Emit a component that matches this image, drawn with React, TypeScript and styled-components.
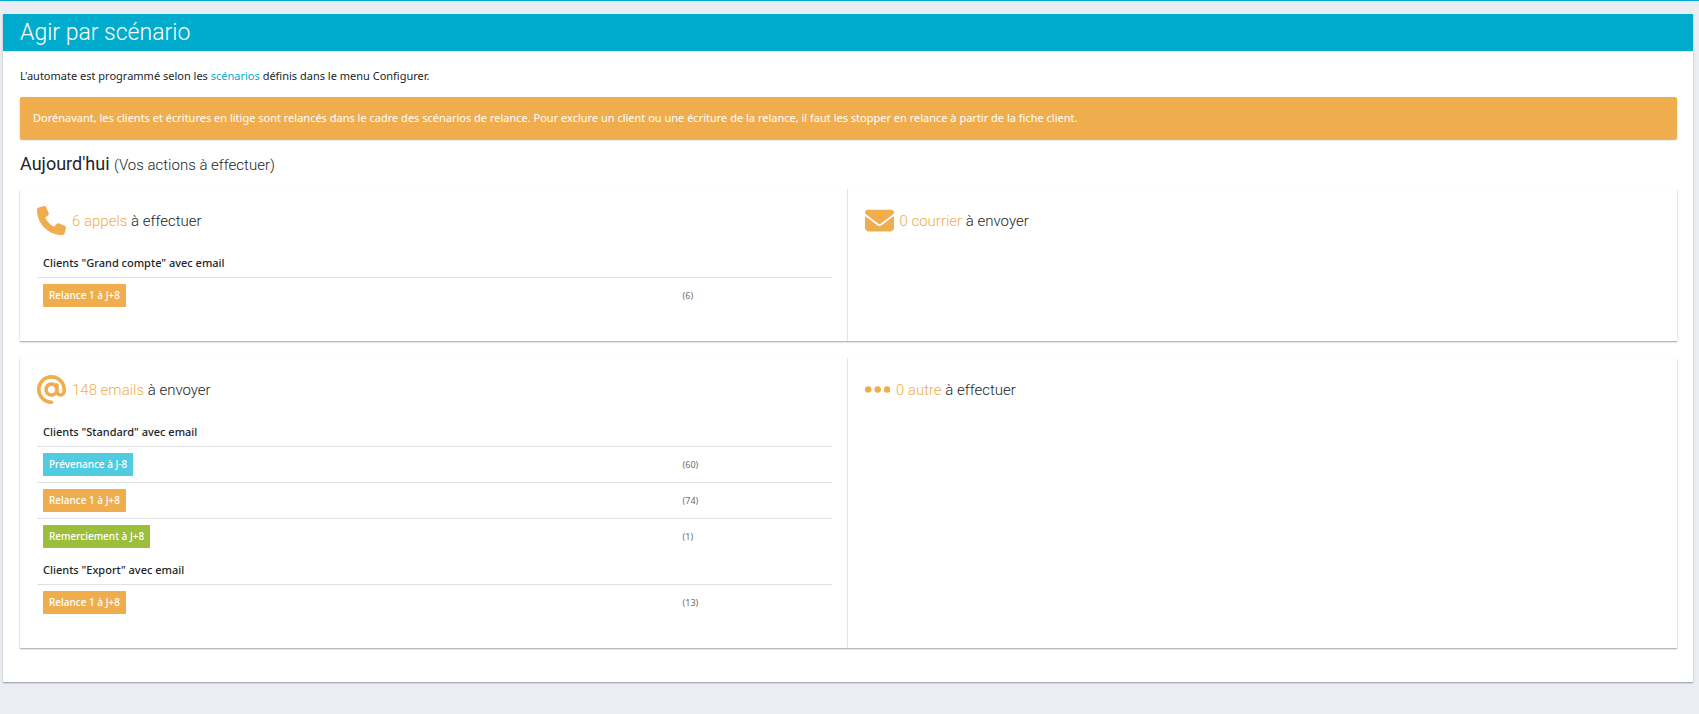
import React from "react";
import styled, { createGlobalStyle } from "styled-components";
import { FaAt, FaEnvelope, FaPhone } from "react-icons/fa6";

const GlobalStyle = createGlobalStyle`
  *, *::before, *::after { box-sizing: border-box; }
  body {
    margin: 0;
    background: #eaeef3;
    color: #212529;
    font-family: "Segoe UI", "Noto Sans", "Open Sans", sans-serif;
    font-size: 11px;
    line-height: 18px;
  }
`;

const ORANGE = "#f0ad4e";
const CYAN = "#00accd";

const Page = styled.main`
  border-top: 1px solid ${CYAN};
  padding: 13px 6px 32px 3px;
`;

const shadow = "0 1px 2px rgba(0, 0, 0, 0.2), 0 1px 1px rgba(0, 0, 0, 0.16)";

const Panel = styled.section`
  background: #fff;
  box-shadow: ${shadow};
`;

const PanelHeader = styled.header`
  display: flex;
  align-items: center;
  height: 37px;
  padding: 0 17px;
  background: ${CYAN};
`;

const PanelTitle = styled.h1`
  margin: 0;
  color: #fff;
  font: 300 23px/35px Roboto, sans-serif;
`;

const PanelBody = styled.div`
  padding: 16px 16px 34px 17px;
`;

const Intro = styled.p`
  margin: 0 0 12px;
`;

const TextLink = styled.a`
  color: ${CYAN};
  text-decoration: none;
`;

const Alert = styled.div`
  padding: 12px 13px;
  border-radius: 2px;
  background: ${ORANGE};
  box-shadow: ${shadow};
  color: #fff;
`;

const SectionTitle = styled.h2`
  margin: 13px 0 13px;
  font: 400 18px/24px Roboto, sans-serif;

  small {
    font-size: 15px;
    font-weight: 300;
    line-height: 1;
  }
`;

const Board = styled.div`
  display: flex;
  flex-direction: column;
  gap: 17px;
`;

const Card = styled.div`
  display: grid;
  grid-template-columns: calc(50% - 2px) 1fr;
  background: #fff;
  box-shadow: ${shadow};
`;

const Column = styled.section`
  padding: 16px 15px 28px 17px;

  & + & {
    border-left: 1px solid #e3e5e7;
  }
`;

const ColumnTitle = styled.h3`
  display: flex;
  align-items: center;
  gap: 6px;
  height: 30px;
  margin: 0 0 12px;
  font: 300 15px/30px Roboto, sans-serif;

  svg {
    flex: none;
    width: auto;
    height: 29px;
    color: ${ORANGE};
  }

  span {
    padding-top: 2px;
  }

  em {
    color: ${ORANGE};
    font-style: normal;
  }
`;

const ScenarioTable = styled.table`
  width: 100%;
  table-layout: fixed;
  border-collapse: separate;
  border-spacing: 0;
`;

const GroupHead = styled.th`
  padding: 7px 6px 5px;
  font-weight: 500;
  text-align: left;
`;

const StepCell = styled.td`
  height: 36px;
  padding: 0 6px;
  border-top: 1px solid #dee2e6;
`;

const CountCell = styled.td`
  padding: 0 10px;
  border-top: 1px solid #dee2e6;
  color: #6c6c6c;
  font-size: 9px;
`;

type Tone = "warning" | "info" | "success";

const tones: Record<Tone, string> = {
  warning: ORANGE,
  info: "#50cbe0",
  success: "#9bbf3b",
};

const StepButton = styled.button<{ $tone: Tone }>`
  display: block;
  height: 23px;
  padding: 0 6px;
  border: 0;
  border-radius: 1px;
  background: ${({ $tone }) => tones[$tone]};
  color: #fff;
  font: inherit;
  font-size: 10px;
  font-weight: 500;
  line-height: 23px;
  white-space: nowrap;
  cursor: pointer;
`;

function Dots() {
  return (
    <svg viewBox="0 0 448 512" fill="currentColor" aria-hidden>
      <circle cx="56" cy="256" r="58" />
      <circle cx="224" cy="256" r="58" />
      <circle cx="392" cy="256" r="58" />
    </svg>
  );
}

interface Step {
  label: string;
  tone: Tone;
  count: number;
}

interface Group {
  name: string;
  steps: Step[];
}

interface Task {
  icon: React.ReactNode;
  amount: string;
  action: string;
  groups: Group[];
}

const relance = (count: number): Step => ({ label: "Relance 1 à J+8", tone: "warning", count });

const rows: Task[][] = [
  [
    {
      icon: <FaPhone aria-hidden />,
      amount: "6 appels",
      action: "à effectuer",
      groups: [{ name: 'Clients "Grand compte" avec email', steps: [relance(6)] }],
    },
    { icon: <FaEnvelope aria-hidden />, amount: "0 courrier", action: "à envoyer", groups: [] },
  ],
  [
    {
      icon: <FaAt aria-hidden />,
      amount: "148 emails",
      action: "à envoyer",
      groups: [
        {
          name: 'Clients "Standard" avec email',
          steps: [
            { label: "Prévenance à J-8", tone: "info", count: 60 },
            relance(74),
            { label: "Remerciement à J+8", tone: "success", count: 1 },
          ],
        },
        { name: 'Clients "Export" avec email', steps: [relance(13)] },
      ],
    },
    { icon: <Dots />, amount: "0 autre", action: "à effectuer", groups: [] },
  ],
];

function TaskColumn({ task }: { task: Task }) {
  return (
    <Column>
      <ColumnTitle>
        {task.icon}
        <span>
          <em>{task.amount}</em> {task.action}
        </span>
      </ColumnTitle>
      {task.groups.length > 0 && (
        <ScenarioTable>
          <colgroup>
            <col width="80%" />
            <col />
          </colgroup>
          {task.groups.map((group) => (
            <tbody key={group.name}>
              <tr>
                <GroupHead colSpan={2} scope="rowgroup">
                  {group.name}
                </GroupHead>
              </tr>
              {group.steps.map((step) => (
                <tr key={step.label}>
                  <StepCell>
                    <StepButton type="button" $tone={step.tone}>
                      {step.label}
                    </StepButton>
                  </StepCell>
                  <CountCell>({step.count})</CountCell>
                </tr>
              ))}
            </tbody>
          ))}
        </ScenarioTable>
      )}
    </Column>
  );
}

export default function App() {
  return (
    <>
      <GlobalStyle />
      <Page>
        <Panel>
          <PanelHeader>
            <PanelTitle>Agir par scénario</PanelTitle>
          </PanelHeader>
          <PanelBody>
            <Intro>
              L'automate est programmé selon les <TextLink href="#scenarios">scénarios</TextLink> définis dans le menu
              Configurer.
            </Intro>
            <Alert role="alert">
              Dorénavant, les clients et écritures en litige sont relancés dans le cadre des scénarios de relance. Pour
              exclure un client ou une écriture de la relance, il faut les stopper en relance à partir de la fiche
              client.
            </Alert>
            <SectionTitle>
              Aujourd'hui <small>(Vos actions à effectuer)</small>
            </SectionTitle>
            <Board>
              {rows.map((tasks) => (
                <Card key={tasks[0].amount}>
                  {tasks.map((task) => (
                    <TaskColumn key={task.amount} task={task} />
                  ))}
                </Card>
              ))}
            </Board>
          </PanelBody>
        </Panel>
      </Page>
    </>
  );
}
